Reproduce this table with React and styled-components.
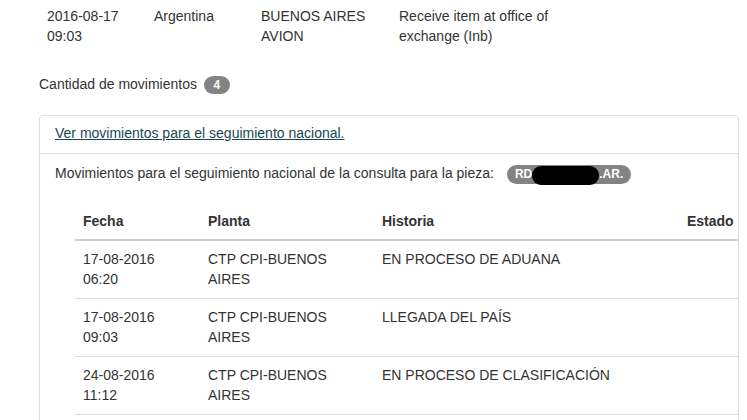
import styled, { createGlobalStyle } from 'styled-components';

const GlobalStyle = createGlobalStyle`
  body {
    margin: 0;
    background: #fff;
    font-family: "Liberation Sans", Arial, sans-serif;
    font-size: 14px;
    line-height: 20px;
    color: #333;
  }
`;

const Page = styled.div`
  width: 700px;
  padding-left: 39px;
`;

const Col = styled.col`
  width: ${p => (p.$w ? `${p.$w}px` : 'auto')};
`;

const IntlTable = styled.table`
  border-collapse: collapse;
  table-layout: fixed;

  td {
    padding: 6px 8px 8px;
    vertical-align: top;
  }
`;

const Count = styled.div`
  margin-top: 20px;
`;

const Badge = styled.span`
  display: inline-block;
  min-width: 10px;
  padding: 3px 8px;
  margin-left: ${p => p.$gap || 3}px;
  font-size: 12px;
  font-weight: bold;
  line-height: 1;
  color: #fff;
  text-align: center;
  white-space: nowrap;
  vertical-align: middle;
  background-color: #838383;
  border-radius: 10px;
`;

const Redacted = styled.span`
  display: inline-block;
  width: 67px;
  height: 19px;
  margin: -3px 0 -4px;
  background: #000;
  border-radius: 9px;
  vertical-align: middle;
`;

const Panel = styled.div`
  margin-top: 21px;
  border: 1px solid #ddd;
  border-radius: 4px;
  overflow: hidden;
`;

const PanelHeading = styled.div`
  padding: 7px 15px 10px;
  border-bottom: 1px solid #ddd;

  a {
    color: #17484f;
    text-decoration: underline;
  }
`;

const PanelBody = styled.div`
  padding: 9px 15px 15px;
`;

const TableWrap = styled.div`
  margin-top: 19px;
  padding-left: 20px;
`;

const MovTable = styled.table`
  width: 760px;
  border-collapse: collapse;
  table-layout: fixed;

  th {
    text-align: left;
    font-weight: bold;
    padding: 8px;
    border-bottom: 2px solid #d0d0d0;
  }

  td {
    padding: 8px 8px 9px;
    vertical-align: top;
    border-bottom: 1px solid #ddd;
  }
`;

const intl = [
  { date: '2016-08-17', time: '09:03', country: 'Argentina', place: 'BUENOS AIRES AVION', event: 'Receive item at office of exchange (Inb)' },
];

const movs = [
  { date: '17-08-2016', time: '06:20', planta: 'CTP CPI-BUENOS AIRES', historia: 'EN PROCESO DE ADUANA' },
  { date: '17-08-2016', time: '09:03', planta: 'CTP CPI-BUENOS AIRES', historia: 'LLEGADA DEL PAÍS' },
  { date: '24-08-2016', time: '11:12', planta: 'CTP CPI-BUENOS AIRES', historia: 'EN PROCESO DE CLASIFICACIÓN' },
];

export default function App() {
  return (
    <>
      <GlobalStyle />
      <Page>
        <IntlTable>
          <colgroup>
            <Col $w={107} />
            <Col $w={107} />
            <Col $w={138} />
            <Col $w={186} />
          </colgroup>
          <tbody>
            {intl.map((r, i) => (
              <tr key={i}>
                <td>{r.date}<br />{r.time}</td>
                <td>{r.country}</td>
                <td>{r.place}</td>
                <td>{r.event}</td>
              </tr>
            ))}
          </tbody>
        </IntlTable>

        <Count>
          Cantidad de movimientos <Badge>4</Badge>
        </Count>

        <Panel>
          <PanelHeading>
            <a href="#">Ver movimientos para el seguimiento nacional.</a>
          </PanelHeading>
          <PanelBody>
            <div>
              Movimientos para el seguimiento nacional de la consulta para la pieza:
              <Badge $gap={13}>RD<Redacted />.AR.</Badge>
            </div>
            <TableWrap>
              <MovTable>
                <colgroup>
                  <Col $w={125} />
                  <Col $w={174} />
                  <Col $w={305} />
                  <Col />
                </colgroup>
                <thead>
                  <tr>
                    <th>Fecha</th>
                    <th>Planta</th>
                    <th>Historia</th>
                    <th>Estado</th>
                  </tr>
                </thead>
                <tbody>
                  {movs.map((m, i) => (
                    <tr key={i}>
                      <td>{m.date}<br />{m.time}</td>
                      <td>{m.planta}</td>
                      <td>{m.historia}</td>
                      <td></td>
                    </tr>
                  ))}
                </tbody>
              </MovTable>
            </TableWrap>
          </PanelBody>
        </Panel>
      </Page>
    </>
  );
}
